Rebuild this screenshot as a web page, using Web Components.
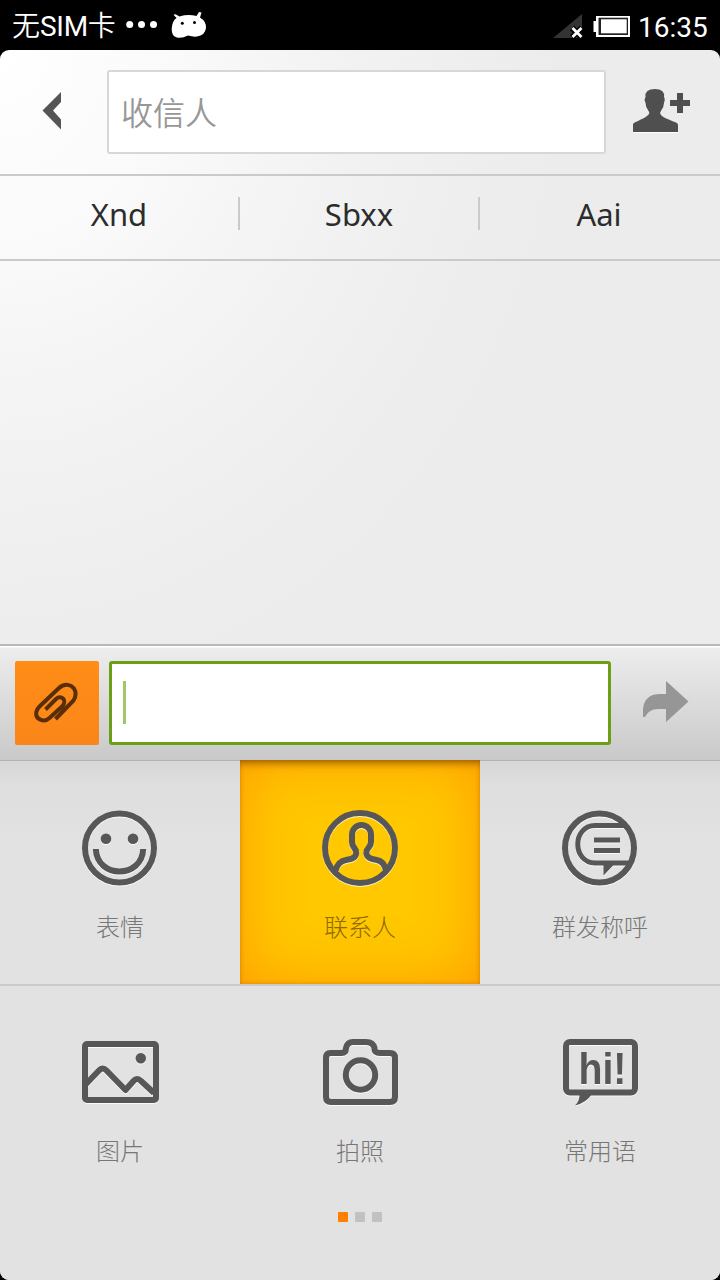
<!DOCTYPE html>
<html lang="zh-CN">
<head>
<meta charset="utf-8">
<title>新建短信</title>
<style>
  html, body { margin: 0; height: 100%; background: #000; overflow: hidden; }
  body { font-family: "Noto Sans", "Noto Sans CJK SC", sans-serif; }
</style>
</head>
<body>
<message-app></message-app>
<script>
const define = (name, html, init) => {
  const t = document.createElement('template');
  t.innerHTML = html;
  customElements.define(name, class extends HTMLElement {
    constructor() {
      super();
      this.attachShadow({ mode: 'open' }).append(t.content.cloneNode(true));
    }
    connectedCallback() { if (init) init(this, this.shadowRoot); }
  });
};

define('status-bar', `
<style>
  :host { display: flex; box-sizing: border-box; height: 50px; padding: 0 12px; align-items: center; background: #000; color: #fff;
          font: 28px/50px Roboto, "Noto Sans CJK SC", sans-serif; }
  .carrier { font-weight: 350; width: 112px; white-space: nowrap; padding-top: 3px; }
  .carrier b { font-weight: 400; letter-spacing: -.3px; }
  .time { width: 70px; margin-left: 7px; padding-top: 5px; }
  .gap { flex: 1; }
  svg { display: block; flex: none; }
</style>
<span class="carrier">无<b>SIM</b>卡</span>
<svg width="90" height="50" viewBox="124 0 90 50">
  <g fill="#fff"><circle cx="129.700" cy="24.500" r="3.500"/><circle cx="141.500" cy="24.500" r="3.500"/><circle cx="153.500" cy="24.500" r="3.500"/>
  <path d="M176.500 18L173.500 14.800L175.500 14.200L179.500 16.500Q188 13.800 196.500 16L199 12L201.500 12.500L200 17.500Q206.500 21.500 206 28Q205 35.500 197 36.500Q193 37 188 35.500Q182 38.500 177 37.500Q171.500 36 171.700 29Q172 21 176.500 18Z"/></g>
  <circle cx="182.300" cy="23.300" r="1.500"/><circle cx="194.500" cy="22.500" r="1.500"/>
</svg>
<span class="gap"></span>
<svg width="79" height="50" viewBox="552 0 79 50">
  <path d="M553 38L582 14V38Z" fill="#333"/>
  <path d="M572 28l10 9.500M582 28l-10 9.500" stroke="#000" stroke-width="6"/>
  <path d="M572.500 28l9 9M581.500 28l-9 9" stroke="#fff" stroke-width="2.800"/>
  <path d="M596 16H630V37H596V32H593.500V21H596Z" fill="#fff"/>
  <rect x="598.500" y="17.700" width="29.500" height="17.300" fill="#222"/>
  <rect x="601" y="19.300" width="25.700" height="14" fill="#fff"/>
</svg>
<span class="time">16:35</span>`);

define('recipient-bar', `
<style>
  :host { display: flex; box-sizing: border-box; height: 126px; padding-top: 20px; align-items: flex-start; border-bottom: 2px solid #cacaca; }
  .field { box-sizing: border-box; width: 499px; height: 84px; border: 2px solid #d7d7d7; border-radius: 3px; background: #fff; padding-left: 12px;
           font: 350 32px/78px "Noto Sans CJK SC", sans-serif; color: #979797; }
  svg { display: block; flex: none; }
</style>
<svg width="107" height="84" viewBox="0 70 107 84"><path d="M61 92L42.500 110.500L61 129.500V119.500L53 110.500L61 102Z" fill="#555"/></svg>
<div class="field"><slot></slot></div>
<svg width="114" height="84" viewBox="606 70 114 84">
  <path d="M633 133V125.500C633 123 643 120.500 647 117Q650.500 114.500 648.500 112Q645.500 108.500 645.500 104L644.500 101Q645 99 645.500 98Q644.500 89 655 89Q665 89 664 98Q665 99 664.700 101.500L664 104Q664 108.500 661 112Q659 114.500 662 117C666 120.500 678 123 678 125.500V133Z" fill="#fff"/>
  <path d="M633 132V124.500C633 122 643 119.500 647 116Q650.500 113.500 648.500 111Q645.500 107.500 645.500 103L644.500 100Q645 98 645.500 97Q644.500 89 655 89Q665 89 664 97Q665 98 664.700 100.500L664 103Q664 107.500 661 111Q659 113.500 662 116C666 119.500 678 122 678 124.500V132Z" fill="#4f4f4f"/>
  <path d="M677 93h6v7h7v6h-7v7h-6v-7h-7v-6h7z" fill="#4f4f4f"/>
</svg>`);

define('recent-contacts', `
<style>
  :host { display: grid; grid-template-columns: 240px 240px 240px; box-sizing: border-box; height: 85px; border-bottom: 2px solid #cacaca; padding-top: 21px; }
  ::slotted(span) { box-sizing: border-box; height: 33px; text-align: center; font-size: 31px; line-height: 35px; color: #2c2c2c; border-right: 2px solid #cacaca; }
  ::slotted(span:last-child) { border-right-color: transparent; }
</style><slot></slot>`);

define('compose-bar', `
<style>
  :host { display: flex; box-sizing: border-box; height: 116px; padding: 14px 0 0 15px; border-top: 2px solid #b9b9b9;
          background: linear-gradient(#fff 1px, #ededed 2px, #c9c9c9 100%); }
  .attach { width: 84px; height: 84px; margin-top: 1px; border-radius: 2px; background: linear-gradient(#ff8d17, #fa8619); }
  .input { box-sizing: border-box; width: 502px; height: 84px; margin: 1px 0 0 10px; border: 3px solid #6a9f16; border-radius: 3px; background: #fff; padding: 17px 11px; }
  .caret { width: 3px; height: 43px; background: #a1c767; }
  svg { display: block; }
  .send { margin-top: 1px; }
</style>
<div class="attach"><svg width="84" height="84" viewBox="15 661 84 84">
  <path d="M45.500 709.500L56 699C61 694.500 67.500 700 62.500 706L49.500 718C44 723 35 719.500 36.300 712Q37 709 39.500 706.500L59 688C64.500 683 71 684.500 74 688.500Q77.500 694 73.500 700.500L55.500 719" fill="none" stroke="#5a2e08" stroke-width="4"/>
</svg></div>
<div class="input"><div class="caret"></div></div>
<svg class="send" width="109" height="84" viewBox="611 661 109 84"><path d="M666 681L688.500 701.500L666 722V709H659C651 709 648 712 645 717H643V709C644 698 651 694 660 694H666Z" fill="#969696"/></svg>`);

const icons = {
  smile: `<circle cx="39.500" cy="40" r="34.500"/><path d="M15.800 41C17 71 62 71 63.200 41"/><g class="solid"><circle cx="26" cy="30.800" r="5.300"/><circle cx="53" cy="30.800" r="5.300"/></g>`,
  person: `<circle cx="40" cy="40" r="35"/><path d="M15.500 63C17 55 22 52.500 27 51.700C34 51 37 48 36 43.500C35.500 40 32 39 32 34V26.500A9.500 9.500 0 0 1 51 26.500V34C51 39 47 40 46.500 43.500C45.500 48 49 51 56 51.700C61 52.500 65 55 66 63"/>`,
  group: `<circle cx="39.500" cy="40" r="34.500"/><path d="M64 17.500H35C12 18 12 54.500 35 55H69M34 32H60M34 42.500H60" stroke-width="5"/><path class="solid" d="M43.500 56H54.500L43.500 67.500Z"/>`,
  picture: `<rect x="5" y="12" width="71" height="56" rx="2"/><path d="M6 52L19 38.500Q22.500 34.500 26.500 38.500L45.500 58L53.500 49Q57 45 61 49L74 61" stroke-linejoin="round"/><circle class="solid" cx="60.800" cy="26.200" r="5.200"/>`,
  camera: `<path d="M10.500 21H21.500Q26 21 26 16Q27.500 10 33 10H46Q53 10 54.500 16Q54 21 60 21H70Q75 21 75 26V65Q75 70 70 70H11Q6 70 6 65V26Q6 21 10.500 21Z"/><circle cx="40.500" cy="43" r="14.700"/>`,
  hi: `<rect x="6" y="10" width="69" height="50.500" rx="4"/><path class="solid" d="M19.500 62H32Q26 71 15 73.500Q20 69 19.500 62Z"/><text x="18.400" y="52" textLength="48" lengthAdjust="spacingAndGlyphs">hi!</text>`
};

define('tool-tile', `
<style>
  :host { display: flex; flex-direction: column; align-items: center; box-sizing: border-box; height: 224px; padding-top: 48px; --c: #575757; }
  :host([row="2"]) { border-top: 2px solid #cacaca; padding-top: 46px; }
  svg { display: block; overflow: visible; fill: none; stroke: var(--c); stroke-width: 6; filter: drop-shadow(0 1px 0 rgba(255,255,255,.8)); }
  .solid { fill: var(--c); stroke: none; }
  text { fill: var(--c); stroke: none; font: bold 44px "Liberation Sans", sans-serif; }
  .label { margin-top: 23px; height: 30px; font: 300 24px/30px "Noto Sans CJK SC", sans-serif; color: #777; }
  :host([active]) .label { color: #8c6a00; }
  :host([active]) { background: #ffc800;
     box-shadow: inset 0 9px 9px -6px rgba(125,75,0,.75), inset 0 0 4px rgba(195,105,0,.6), inset 0 0 62px #ff9c00; }
</style>
<svg width="80" height="80" viewBox="0 0 80 80"></svg>
<div class="label"><slot></slot></div>`, (el, root) => {
  root.querySelector('svg').innerHTML = icons[el.getAttribute('icon')];
});

define('page-dots', `
<style>
  :host { display: flex; justify-content: center; gap: 7px; padding-top: 4px; }
  i { width: 10px; height: 10px; border-radius: 1px; background: #c1c1c1; }
  .on { background: #ff8000; }
</style><i class="on"></i><i></i><i></i>`);

define('tool-panel', `
<style>
  :host { display: block; flex: 1; background: linear-gradient(#b2b2b2 1px, #d7d7d7 1px, #dedede 24px, #e2e2e2 80px); }
  .grid { display: grid; grid-template-columns: repeat(3, 1fr); }
</style>
<div class="grid"><slot></slot></div>
<page-dots></page-dots>`);

define('message-app', `
<style>
  :host { display: flex; flex-direction: column; width: 720px; height: 1280px; }
  main { flex: 1; display: flex; flex-direction: column; overflow: hidden; border-radius: 9px;
         background: radial-gradient(ellipse 560px 640px at 0 0, #fff, #fafafa 30%, #f2f2f2 62%, #ececec 100%); }
  .thread { flex: 1; }
  tool-panel { flex: 0 0 520px; }
</style>
<status-bar></status-bar>
<main>
  <recipient-bar>收信人</recipient-bar>
  <recent-contacts><span>Xnd</span><span>Sbxx</span><span>Aai</span></recent-contacts>
  <div class="thread"></div>
  <compose-bar></compose-bar>
  <tool-panel>
    <tool-tile icon="smile">表情</tool-tile>
    <tool-tile icon="person" active>联系人</tool-tile>
    <tool-tile icon="group">群发称呼</tool-tile>
    <tool-tile icon="picture" row="2">图片</tool-tile>
    <tool-tile icon="camera" row="2">拍照</tool-tile>
    <tool-tile icon="hi" row="2">常用语</tool-tile>
  </tool-panel>
</main>`);
</script>
</body>
</html>
